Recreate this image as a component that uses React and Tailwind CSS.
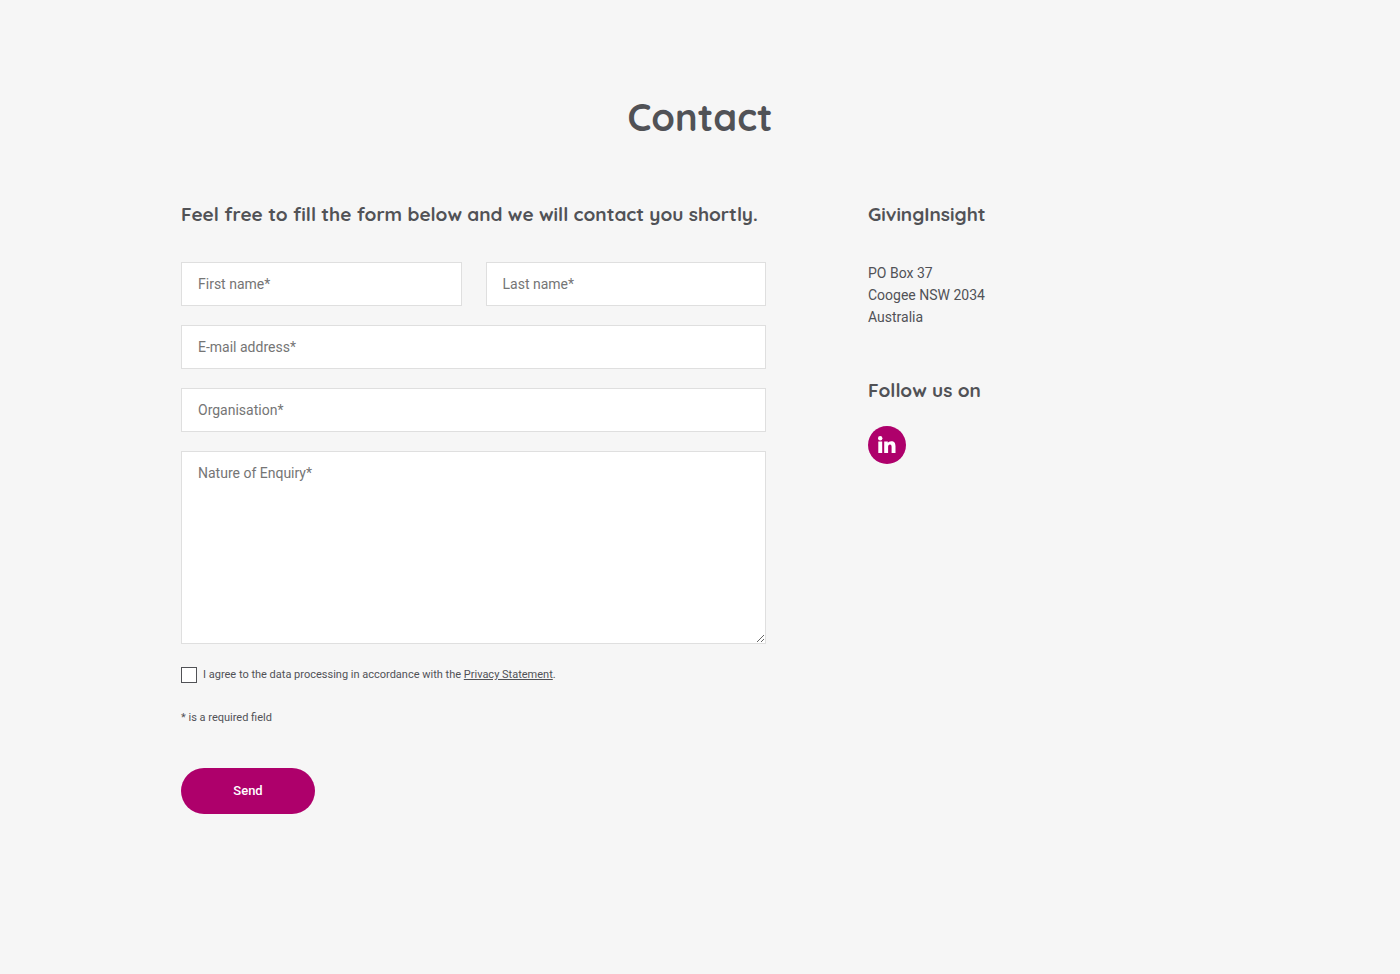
import React, { useState } from 'react';

const fieldClass =
  'block w-full rounded-none border border-[#dfdfdf] bg-white px-4 text-sm leading-5 text-[#515256] placeholder:text-[#757575] focus:border-[#ae006b] focus:outline-none';

const headingClass = "font-['Quicksand','Lato',sans-serif] text-[19px] leading-7 font-bold text-[#515256]";

const LinkedinIcon = () => (
  <svg viewBox="0 0 18 18" className="h-[18px] w-[18px]" fill="currentColor" aria-hidden="true">
    <circle cx="2.200" cy="2.200" r="2.200" />
    <path d="M.3 5.500h3.900V17H.3zM6.200 5.500h3.600v1.500c.6-1.100 1.800-1.800 3.400-1.800 3.200 0 4.300 1.900 4.300 5V17h-3.900v-6c0-1.500-.4-2.400-1.600-2.400-1.300 0-1.900 1-1.900 2.400v6H6.200z" />
  </svg>
);

const Field = ({ id, label, type = 'text', value, onChange }) => (
  <input
    id={id}
    name={id}
    type={type}
    aria-label={label}
    placeholder={`${label}*`}
    required
    value={value}
    onChange={onChange}
    className={`h-11 ${fieldClass}`}
  />
);

const Contact = () => {
  const [formState, setFormState] = useState({
    firstName: '',
    lastName: '',
    email: '',
    organisation: '',
    enquiry: '',
    agree: false,
  });

  const handleChange = (e) => {
    const { name, type, checked, value } = e.target;
    setFormState({ ...formState, [name]: type === 'checkbox' ? checked : value });
  };

  const handleSubmit = (e) => {
    e.preventDefault();
  };

  return (
    <main className="min-h-screen bg-[#f6f6f6] px-6 pt-[92px] pb-40 font-['Roboto',sans-serif] text-sm text-[#515256]">
      <h1 className="text-center font-['Quicksand','Lato',sans-serif] text-[38px] leading-[50px] font-bold">Contact</h1>

      <div className="mx-auto mt-[58px] grid max-w-[1038px] grid-cols-1 gap-12 md:grid-cols-[585fr_351fr] md:gap-[102px]">
        {/* Contact form */}
        <section>
          <h2 className={headingClass}>Feel free to fill the form below and we will contact you shortly.</h2>

          <form onSubmit={handleSubmit} className="mt-[34px]">
            <div className="flex flex-col gap-[19px]">
              <div className="grid grid-cols-1 gap-[19px] sm:grid-cols-2 sm:gap-x-6">
                <Field id="firstName" label="First name" value={formState.firstName} onChange={handleChange} />
                <Field id="lastName" label="Last name" value={formState.lastName} onChange={handleChange} />
              </div>
              <Field id="email" type="email" label="E-mail address" value={formState.email} onChange={handleChange} />
              <Field id="organisation" label="Organisation" value={formState.organisation} onChange={handleChange} />
              <textarea
                id="enquiry"
                name="enquiry"
                aria-label="Nature of Enquiry"
                placeholder="Nature of Enquiry*"
                required
                value={formState.enquiry}
                onChange={handleChange}
                className={`h-[193px] resize py-[11px] ${fieldClass}`}
              />
            </div>

            <div className="mt-[23px] flex items-center gap-1.5 text-[11px] leading-4">
              <input
                id="agree"
                name="agree"
                type="checkbox"
                required
                checked={formState.agree}
                onChange={handleChange}
                className="h-4 w-4 shrink-0 appearance-none border border-[#515256] bg-white checked:bg-[#ae006b]"
              />
              <label htmlFor="agree">
                I agree to the data processing in accordance with the{' '}
                <a href="#privacy" className="underline">Privacy Statement</a>.
              </label>
            </div>

            <p className="mt-[27px] text-[11px] leading-4">* is a required field</p>

            <button
              type="submit"
              className="mt-[42px] h-[46px] w-[134px] rounded-full bg-[#ae006b] text-[13px] font-medium text-white"
            >
              Send
            </button>
          </form>
        </section>

        {/* Address and social links */}
        <aside>
          <h2 className={headingClass}>GivingInsight</h2>
          <address className="mt-[34px] leading-[22px] not-italic">
            PO Box 37
            <br />
            Coogee NSW 2034
            <br />
            Australia
          </address>

          <h2 className={`mt-12 ${headingClass}`}>Follow us on</h2>
          <a
            href="#linkedin"
            aria-label="LinkedIn"
            className="mt-[22px] flex h-[38px] w-[38px] items-center justify-center rounded-full bg-[#ae006b] text-white"
          >
            <LinkedinIcon />
          </a>
        </aside>
      </div>
    </main>
  );
};

export default Contact;
